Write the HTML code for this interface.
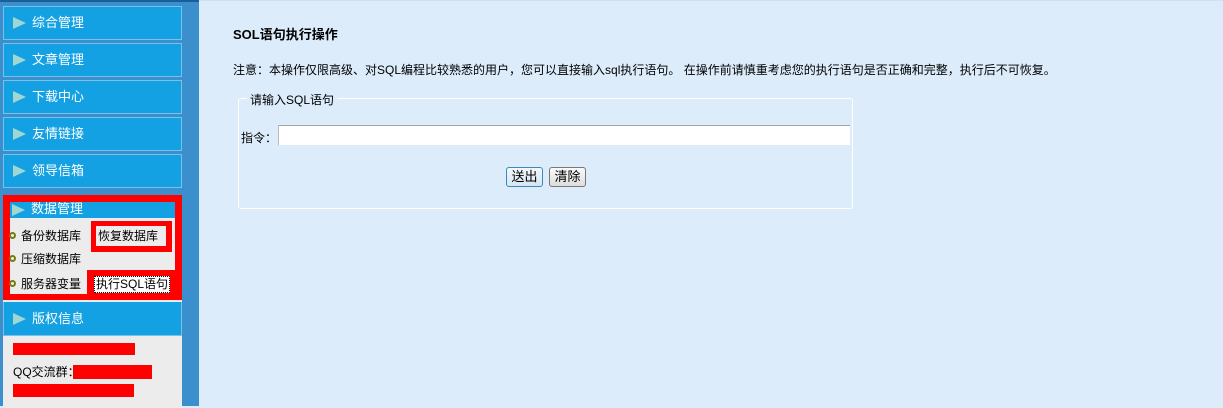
<!DOCTYPE html>
<html><head><meta charset="utf-8"><style>
*{margin:0;padding:0;box-sizing:border-box}
body{width:1223px;height:406px;overflow:hidden;background:#dcecfb;font-family:"Liberation Sans","Noto Sans CJK SC",sans-serif;font-size:12px;color:#000;position:relative}
.side{position:absolute;left:0;top:0;width:199px;height:406px;background:#3a8fcc;border-top:2px solid #1b5f98}
.item{position:absolute;left:3px;width:179px;height:34px;background:#13a1e3;border:1px solid #7cc0ea;color:#fff;font-size:13px;line-height:32px;padding-left:28px}
.tri{position:absolute;left:9px;top:10px;width:0;height:0;border-left:13px solid #9fd8d0;border-top:6px solid transparent;border-bottom:6px solid transparent}
.abs{position:absolute}
.red{position:absolute;background:#f00}
.bul{position:absolute;left:9px;width:7px;height:7px;border:2px solid #7a7a10;border-radius:50%;background:#eee}
.main{position:absolute;left:199px;top:0;right:0;height:406px;border-top:1px solid #cfe0f0}
</style></head><body>
<div class="side">
<div class="item" style="top:4px"><span class="tri"></span>综合管理</div>
<div class="item" style="top:41px"><span class="tri"></span>文章管理</div>
<div class="item" style="top:78px"><span class="tri"></span>下载中心</div>
<div class="item" style="top:115px"><span class="tri"></span>友情链接</div>
<div class="item" style="top:152px"><span class="tri"></span>领导信箱</div>
<div class="item" style="top:298px;height:36px;line-height:36px"><span class="tri" style="top:12px"></span>版权信息</div>
<div class="abs" style="left:3px;top:334px;width:179px;height:72px;background:#ececec"></div>
<!-- data mgmt -->
<div class="abs" style="left:3px;top:195px;width:179px;height:105px;background:#ececec"></div>
<div class="item" style="top:195px;height:21px;line-height:24px;border:none"><span class="tri" style="top:7px"></span>数据管理</div>
</div>
<div class="red" style="left:3px;top:195px;width:179px;height:7px"></div>
<div class="red" style="left:3px;top:195px;width:7px;height:105px"></div>
<div class="red" style="left:175px;top:195px;width:7px;height:105px"></div>
<div class="red" style="left:3px;top:294px;width:179px;height:6px"></div>
<div class="red" style="left:91px;top:221px;width:81px;height:31px"></div>
<div class="abs" style="left:96px;top:226px;width:70px;height:20px;background:#ececec;font-size:12px;line-height:20px;padding-left:2px">恢复数据库</div>
<div class="red" style="left:87px;top:270px;width:90px;height:26px"></div>
<div class="abs" style="left:94px;top:276px;width:76px;height:17px;background:#fff;border:1px dotted #000;font-size:12px;line-height:15px;padding-left:1px">执行SQL语句</div>
<span class="bul" style="left:9px;top:232px"></span><div class="abs" style="left:21px;top:228px;line-height:16px;font-size:12px">备份数据库</div>
<span class="bul" style="left:9px;top:255px"></span><div class="abs" style="left:21px;top:251px;line-height:16px">压缩数据库</div>
<span class="bul" style="left:9px;top:280px"></span><div class="abs" style="left:21px;top:276px;line-height:16px">服务器变量</div>
<div class="red" style="left:13px;top:343px;width:122px;height:12px"></div>
<div class="abs" style="left:13px;top:364px;line-height:16px">QQ交流群：</div>
<div class="red" style="left:73px;top:365px;width:79px;height:14px"></div>
<div class="red" style="left:13px;top:384px;width:121px;height:13px"></div>
<div class="main">
<div class="abs" style="left:34px;top:23px;font-weight:bold;font-size:13px">SOL语句执行操作</div>
<div class="abs" style="left:34px;top:60px;white-space:nowrap">注意：本操作仅限高级、对SQL编程比较熟悉的用户，您可以直接输入sql执行语句。 在操作前请慎重考虑您的执行语句是否正确和完整，执行后不可恢复。</div>
<div class="abs" style="left:39px;top:97px;width:615px;height:111px;border:1px solid #fff;border-radius:3px"></div>
<div class="abs" style="left:48px;top:91px;background:#dcecfb;padding:0 3px;line-height:16px">请输入SQL语句</div>
<div class="abs" style="left:42px;top:128px">指令：</div>
<div class="abs" style="left:79px;top:124px;width:572px;height:20px;background:#fff;border-top:1px solid #9aa;border-left:1px solid #bbb"></div>
<div class="abs" style="left:307px;top:166px;width:37px;height:20px;border:1px solid #3a8ab8;border-radius:3px;background:linear-gradient(#f4f8fb,#d6e6f0);text-align:center;line-height:17px;font-size:13px">送出</div>
<div class="abs" style="left:350px;top:166px;width:37px;height:20px;border:1px solid #777;border-radius:3px;background:linear-gradient(#fafafa,#ddd);text-align:center;line-height:17px;font-size:13px">清除</div>
</div>
</body></html>
